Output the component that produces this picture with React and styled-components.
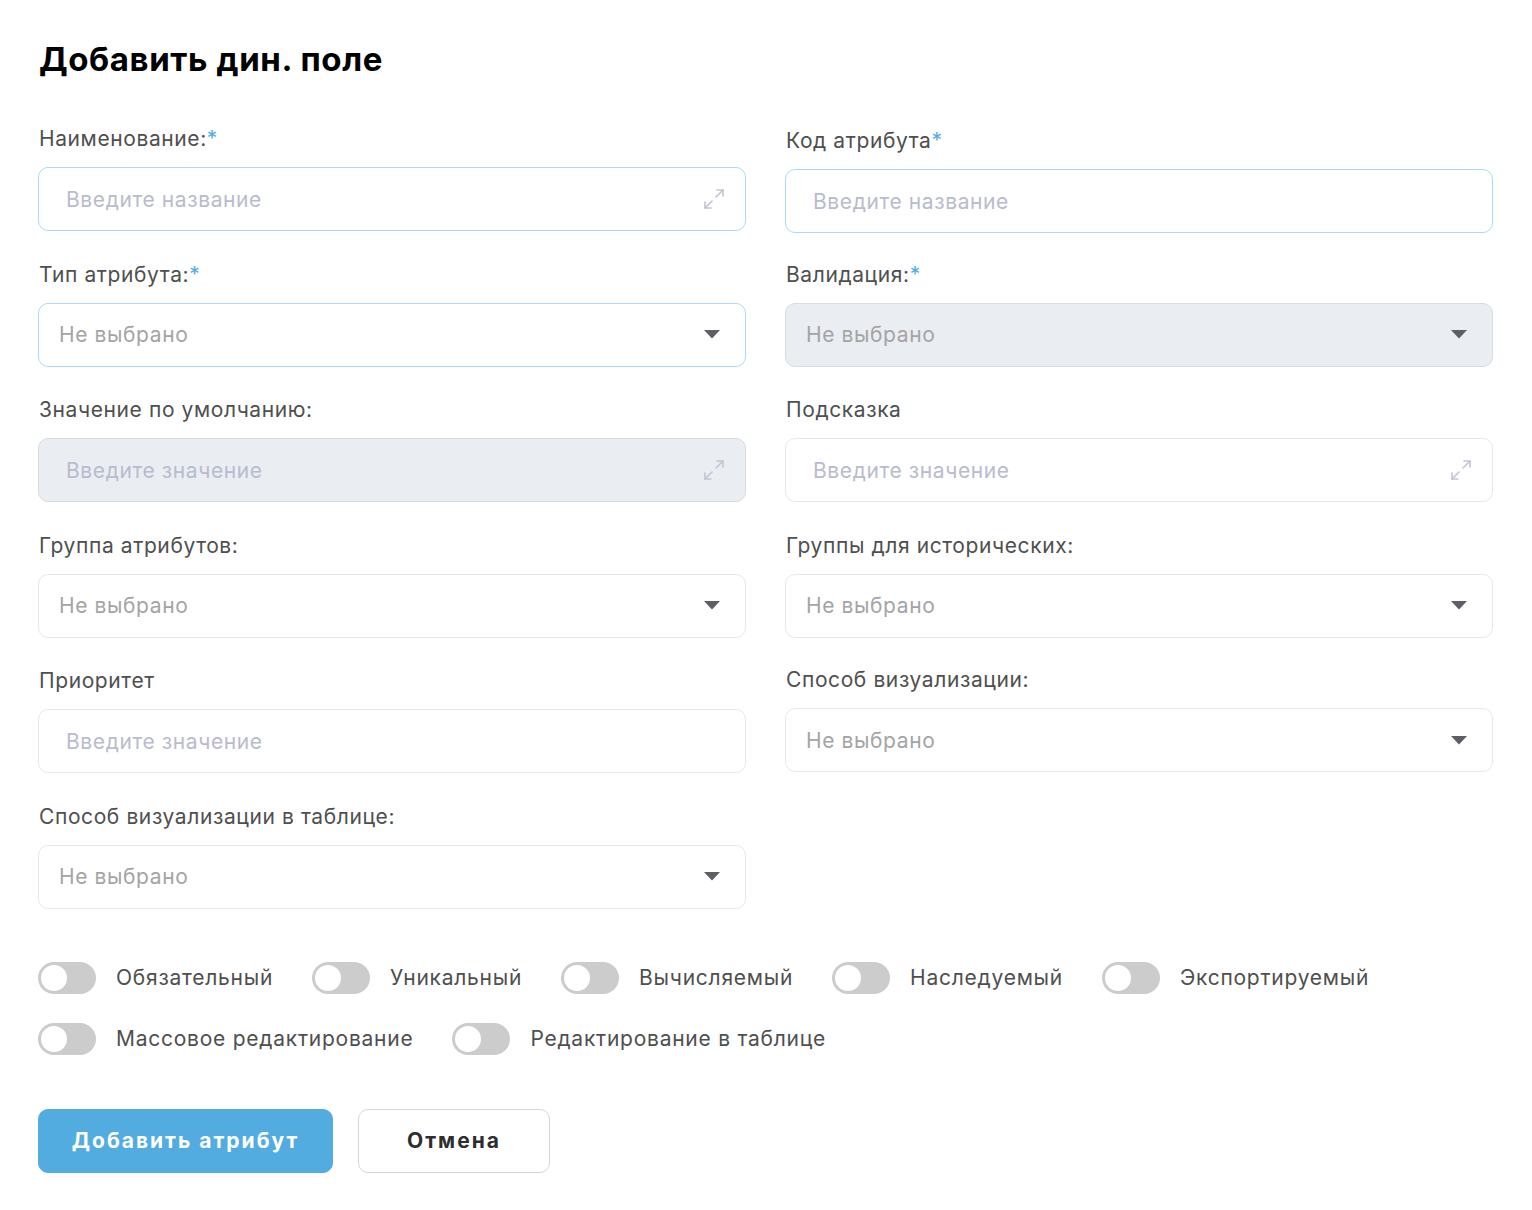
import React, { useState } from "react";
import styled, { createGlobalStyle } from "styled-components";

const GlobalStyle = createGlobalStyle`
  * { box-sizing: border-box; }
  body {
    margin: 0;
    background: #ffffff;
    font-family: Inter, "Noto Sans", sans-serif;
    color: #4a4a4a;
  }
`;

// expand corners, same strokes as the field-resize icon
const ExpandIcon = () => (
  <svg width="24" height="24" viewBox="0 0 24 24" fill="none" stroke="#c3c3d6" strokeWidth="1.6" strokeLinecap="round" strokeLinejoin="round">
    <polyline points="15 3 21 3 21 9" />
    <polyline points="9 21 3 21 3 15" />
    <line x1="21" y1="3" x2="14" y2="10" />
    <line x1="3" y1="21" x2="10" y2="14" />
  </svg>
);

const Caret = () => (
  <svg width="16" height="9" viewBox="0 0 16 9">
    <path d="M0 0 L16 0 L8 8.5 Z" fill="#5e5f66" />
  </svg>
);

const fields = [
  { label: "Наименование:", required: true, kind: "text", placeholder: "Введите название", expand: true, focus: true },
  { label: "Код атрибута", required: true, kind: "text", placeholder: "Введите название", focus: true, shift: 2 },
  { label: "Тип атрибута:", required: true, kind: "select", focus: true },
  { label: "Валидация:", required: true, kind: "select", disabled: true },
  { label: "Значение по умолчанию:", kind: "text", placeholder: "Введите значение", expand: true, disabled: true },
  { label: "Подсказка", kind: "text", placeholder: "Введите значение", expand: true },
  { label: "Группа атрибутов:", kind: "select" },
  { label: "Группы для исторических:", kind: "select" },
  { label: "Приоритет", kind: "text", placeholder: "Введите значение" },
  { label: "Способ визуализации:", kind: "select", shift: -1 },
  { label: "Способ визуализации в таблице:", kind: "select" },
];

const toggleRows = [
  ["Обязательный", "Уникальный", "Вычисляемый", "Наследуемый", "Экспортируемый"],
  ["Массовое редактирование", "Редактирование в таблице"],
];

const Page = styled.div`
  width: 1532px;
  min-height: 1210px;
  padding: 38px 39px 0 38px;
  background: #fff;
`;

const Title = styled.h1`
  margin: 0 0 47px 1px;
  font-size: 33px;
  line-height: 42px;
  font-weight: 700;
  color: #000;
  letter-spacing: 0.6px;
`;

const Grid = styled.div`
  display: grid;
  grid-template-columns: 708px 708px;
  column-gap: 39px;
  row-gap: 31.6px;
`;

const Field = styled.div`
  display: flex;
  flex-direction: column;
  gap: 16px;
  margin-top: ${(p) => p.$shift || 0}px;
  margin-bottom: ${(p) => -(p.$shift || 0)}px;
`;

const Label = styled.label`
  font-size: 21px;
  line-height: 24px;
  letter-spacing: 0.6px;
  color: #4f4f4f;
  padding-left: 1px;
`;

const Star = styled.span`
  color: #4aaee3;
`;

const Box = styled.div`
  height: 64px;
  border-radius: 10px;
  border: 1px solid
    ${(p) => (p.$disabled ? "#d7dce2" : p.$focus ? "#a9dcf3" : "#e6e8eb")};
  background: ${(p) => (p.$disabled ? "#eaeef2" : "#fff")};
  display: flex;
  align-items: center;
  padding: 0 ${(p) => (p.$select ? "25px" : "19px")} 0
    ${(p) => (p.$select ? "20px" : "27px")};
  font-size: 21px;
  letter-spacing: 0.6px;
`;

const Placeholder = styled.span`
  flex: 1;
  color: ${(p) => (p.$select ? "#a4a4a6" : "#b9bbcf")};
`;

const Toggles = styled.div`
  margin-top: 53px;
  display: flex;
  flex-direction: column;
  gap: 29px;
`;

const ToggleRow = styled.div`
  display: flex;
  align-items: center;
  gap: 39px;
`;

const ToggleItem = styled.label`
  display: flex;
  align-items: center;
  gap: 20px;
  font-size: 21px;
  letter-spacing: 0.75px;
  color: #4f4f4f;
  cursor: pointer;
`;

const Track = styled.span`
  width: 58px;
  height: 32px;
  border-radius: 16px;
  background: ${(p) => (p.$on ? "#52ace0" : "#cccccc")};
  position: relative;
  flex-shrink: 0;
  transition: background 0.2s;

  &::after {
    content: "";
    position: absolute;
    top: 3px;
    left: ${(p) => (p.$on ? "29px" : "3px")};
    width: 26px;
    height: 26px;
    border-radius: 50%;
    background: #fff;
    transition: left 0.2s;
  }
`;

const Actions = styled.div`
  margin-top: 54px;
  display: flex;
  gap: 25px;
`;

const Button = styled.button`
  height: 64px;
  width: ${(p) => p.$w}px;
  border-radius: 10px;
  font-family: Inter, "Noto Sans", sans-serif;
  font-size: 21px;
  font-weight: 700;
  letter-spacing: 2px;
  cursor: pointer;
  border: 1px solid ${(p) => (p.$primary ? "#52ace0" : "#cfd8df")};
  background: ${(p) => (p.$primary ? "#52ace0" : "#fff")};
  color: ${(p) => (p.$primary ? "#fff" : "#2e2e2e")};
`;

const Toggle = ({ label }) => {
  const [on, setOn] = useState(false);
  return (
    <ToggleItem onClick={() => setOn(!on)}>
      <Track $on={on} />
      {label}
    </ToggleItem>
  );
};

const App = () => (
  <Page>
    <GlobalStyle />
    <Title>Добавить дин. поле</Title>
    <Grid>
      {fields.map((f, i) => (
        <Field key={i} $shift={f.shift}>
          <Label>
            {f.label}
            {f.required && <Star>*</Star>}
          </Label>
          <Box $select={f.kind === "select"} $disabled={f.disabled} $focus={f.focus}>
            <Placeholder $select={f.kind === "select"}>
              {f.kind === "select" ? "Не выбрано" : f.placeholder}
            </Placeholder>
            {f.kind === "select" && <Caret />}
            {f.expand && <ExpandIcon />}
          </Box>
        </Field>
      ))}
    </Grid>
    <Toggles>
      {toggleRows.map((row, i) => (
        <ToggleRow key={i}>
          {row.map((t) => (
            <Toggle key={t} label={t} />
          ))}
        </ToggleRow>
      ))}
    </Toggles>
    <Actions>
      <Button $primary $w={295}>Добавить атрибут</Button>
      <Button $w={192}>Отмена</Button>
    </Actions>
  </Page>
);

export default App;
